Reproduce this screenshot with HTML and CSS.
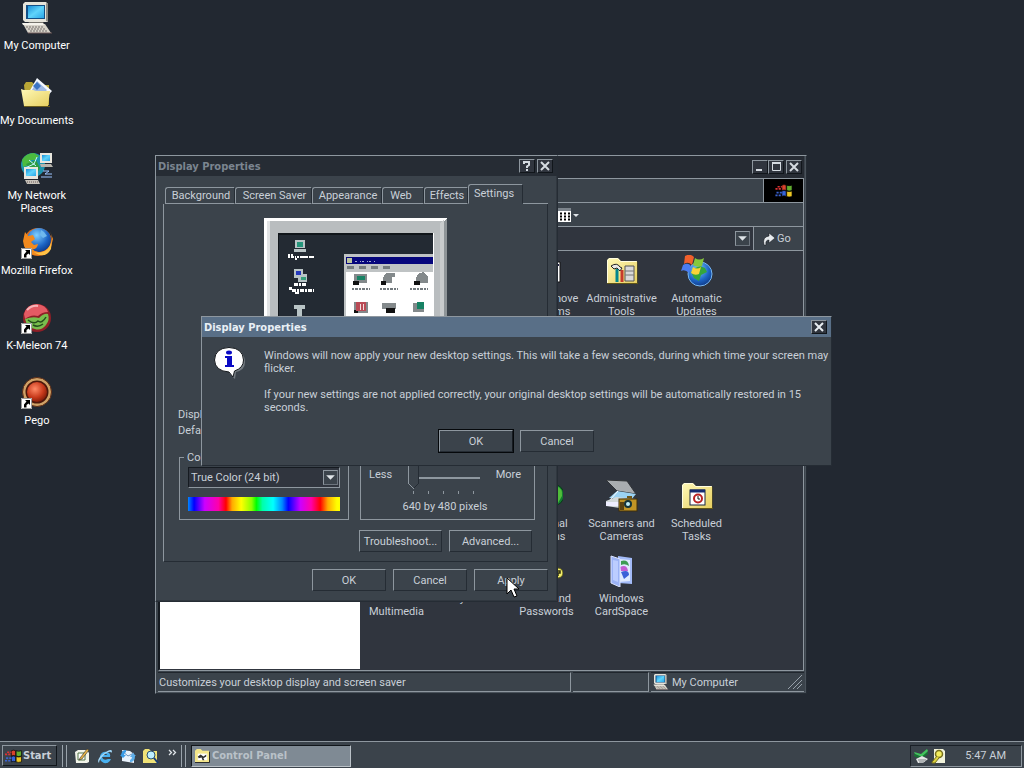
FILE: index.html
```html
<!DOCTYPE html>
<html lang="en">
<head>
<meta charset="utf-8">
<title>Desktop</title>
<link rel="stylesheet" href="styles.css">
</head>
<body>
<svg class="defs" width="0" height="0" aria-hidden="true">
  <defs>
    <linearGradient id="scr" x1="0" y1="0" x2="1" y2="1"><stop offset="0" stop-color="#1a8fd8"/><stop offset=".5" stop-color="#5fd4fb"/><stop offset="1" stop-color="#2aa5e6"/></linearGradient>
    <linearGradient id="fold" x1="0" y1="0" x2="1" y2="1"><stop offset="0" stop-color="#fff9b8"/><stop offset="1" stop-color="#e6cf60"/></linearGradient>
    <radialGradient id="globe" cx=".4" cy=".3" r=".8"><stop offset="0" stop-color="#7fd0ff"/><stop offset=".6" stop-color="#1c63c4"/><stop offset="1" stop-color="#0b2e78"/></radialGradient>
    <radialGradient id="red" cx=".4" cy=".35" r=".7"><stop offset="0" stop-color="#ff8a66"/><stop offset=".6" stop-color="#c83a1c"/><stop offset="1" stop-color="#7a1a08"/></radialGradient>
    <symbol id="pc" viewBox="0 0 32 32">
      <path d="M2 2 4 0h21l2 2v18H4l-2-2z" fill="#e6e4da"/><path d="M25 1l2 1v18l-2-1z" fill="#8d8b84"/>
      <rect x="5" y="3" width="19" height="14" fill="#124f86"/><rect x="7" y="4" width="16" height="12" fill="url(#scr)"/>
      <path d="M8 20h14l2 3H6z" fill="#77756e"/><path d="M2 22h22l6 9H7z" fill="#d6d2c8"/><path d="M1 21h21l1 2H2z" fill="#f5f3ec"/>
      <path d="M5 25h18M7 27h18M9 29h18" stroke="#77706e" stroke-dasharray="2 1"/><path d="M7 31h24" stroke="#6c5757"/>
    </symbol>
    <symbol id="shortcut" viewBox="0 0 11 11">
      <rect width="11" height="11" fill="#fff"/><path d="M.5.5h10v10H.5z" fill="none" stroke="#9b9b9b"/>
      <path d="M4 2h5v5L7.500 5.500 5.500 7v2.500H3V6.500L5.500 3.500z" fill="#000"/>
    </symbol>
    <symbol id="flag" viewBox="0 0 16 14">
      <path d="M6 2q2-1 4 0v5q-2-1-4 0z" fill="#d8432c" stroke="#000" stroke-width=".6"/><path d="M10.500 2q2 1 5 0v5q-3 1-5 0z" fill="#62ad30" stroke="#000" stroke-width=".6"/>
      <path d="M6 7.500q2-1 4 0v5q-2-1-4 0z" fill="#3563d8" stroke="#000" stroke-width=".6"/><path d="M10.500 7.500q2 1 5 0v5q-3 1-5 0z" fill="#edc624" stroke="#000" stroke-width=".6"/>
      <path d="M2 3.500h4M0 5.500h5" stroke="#d33" stroke-width="1.500" stroke-dasharray="2 1"/><path d="M1 9h5M0 11.500h5" stroke="#3a62d0" stroke-width="1.500" stroke-dasharray="2 1"/>
    </symbol>
    <symbol id="folder" viewBox="0 0 32 32">
      <path d="M1 5 3 3h9l3 3h16v22H1z" fill="url(#fold)"/><path d="M1 28.500h31V7" fill="none" stroke="#5f5417"/><path d="M1.500 28V5.500l2-2h8l3 3h16" fill="none" stroke="#fffde0"/>
    </symbol>
  </defs>
</svg>

<main class="desktop">
  <nav class="shortcuts" aria-label="Desktop icons">
    <a class="item" href="#"><svg class="ico"><use href="#pc"/></svg><span>My Computer</span></a>
    <a class="item" href="#"><svg class="ico" viewBox="0 0 32 32">
      <path d="M3 8l2-3h6l3 3h14v20H5z" fill="#b8a636"/><path d="M16 1 31 14 24 22 8 15z" fill="#f4f8ff"/><path d="M16 4l10 9-5 5-10-5z" fill="#9fb9e4"/><path d="M16 5l4 4-4 4-4-4z" fill="#3c74c4"/>
      <path d="M0 12l3 1h9l3 1h14l-2 15H3z" fill="url(#fold)"/><path d="M3 29.500h26" stroke="#6b5c1b"/></svg><span>My Documents</span></a>
    <a class="item" href="#"><svg class="ico" viewBox="0 0 32 32">
      <circle cx="12" cy="13" r="12" fill="#1d94ae"/><path d="M1 8Q5 1 13 1l5 3-4 4-4 0-2 5-6 2z" fill="#4cbb3f"/><path d="M5 12l10-4 4 8-5 9-4-6z" fill="#2e9b40"/><path d="M4 16l9-4 3-7M8 8l7 6" stroke="#c5f5ff" fill="none"/>
      <rect x="19" y="1" width="12" height="10" fill="#e9e7df"/><rect x="21" y="3" width="8" height="6" fill="url(#scr)"/><path d="M19 12h11l2 3H20z" fill="#b7b4ac"/>
      <rect x="3" y="15" width="14" height="12" fill="#e9e7df"/><rect x="5" y="17" width="10" height="7" fill="url(#scr)"/><path d="M4 28h13l2 4H6z" fill="#c8c3ba"/><path d="M6 30h12" stroke="#6d5a5a" stroke-dasharray="1 1"/>
      <path d="M22 19h6l-4 3h7M20 25h11" stroke="#9cc4ff" fill="none"/></svg><span>My Network<br>Places</span></a>
    <a class="item" href="#"><svg class="ico" viewBox="0 0 32 32">
      <circle cx="17" cy="15" r="14" fill="#e26a14"/><circle cx="18" cy="13" r="12" fill="url(#globe)"/>
      <path d="M29 4q4 9 0 17-6 9-16 7Q3 25 2 14L4 5l3 4 5-1 2 4-4 3 3 3 4-1q-1 6-6 5 5 5 12 2 8-4 9-12z" fill="#f28a1e"/><path d="M31 11q-1 9-7 13-6 3-11 1 11 8 17-3z" fill="#ffc145"/><path d="M20 3l3 2 3 4-4 2-3-3z" fill="#6fb8ee"/>
      <use href="#shortcut" x="0" y="21" width="11" height="11"/></svg><span>Mozilla Firefox</span></a>
    <a class="item" href="#"><svg class="ico" viewBox="0 0 32 32">
      <circle cx="16" cy="16" r="14" fill="#8e1f27"/><path d="M3 12Q6 2 16 2q9 1 11 8-6 0-10 4-7-2-13 3z" fill="#e45b64"/><path d="M6 8q5-5 11-4" stroke="#f7b3b6" stroke-width="2" fill="none"/>
      <path d="M4 17q8-3 14-1 5-5 9-4 2 6-2 11-5 6-11 4Q6 26 4 17z" fill="#79bd4d"/><path d="M7 18q6 5 10 1 4 3 8-4M12 23q5 3 10-1" fill="none" stroke="#264d1c" stroke-width="1.500"/>
      <use href="#shortcut" x="0" y="21" width="11" height="11"/></svg><span>K-Meleon 74</span></a>
    <a class="item" href="#"><svg class="ico" viewBox="0 0 32 32">
      <circle cx="16" cy="15" r="13" fill="#4d180b" stroke="#cfa267" stroke-width="3"/><circle cx="16" cy="15" r="14.500" fill="none" stroke="#5c2c16"/><circle cx="16" cy="15" r="10" fill="url(#red)"/>
      <use href="#shortcut" x="0" y="21" width="11" height="11"/></svg><span>Pego</span></a>
  </nav>

  <section class="win explorer" aria-label="Control Panel">
    <header class="titlebar">
      <div class="pair"><button class="cap" aria-label="Minimize"><svg viewBox="0 0 14 12"><path d="M3 9h6" stroke="#d5dbe1" stroke-width="2"/></svg></button><button class="cap" aria-label="Maximize"><svg viewBox="0 0 14 12"><path d="M3.500 2v7.500h8V2M3 2h9" stroke="#d5dbe1" fill="none"/><path d="M3 2h9" stroke="#d5dbe1" stroke-width="2"/></svg></button></div>
      <button class="cap" aria-label="Close"><svg viewBox="0 0 14 12"><path d="M3 2l8 8M11 2l-8 8" stroke="#d5dbe1" stroke-width="2"/></svg></button>
    </header>
    <div class="bar menubar"><div class="brand"><svg width="18" height="15"><use href="#flag"/></svg></div></div>
    <div class="bar toolbar">
      <button class="views" aria-label="Views"><svg width="24" height="16" viewBox="0 0 24 16"><rect x="0" y="1" width="16" height="14" fill="#fff"/><path d="M0 1h16v3H0z" fill="#7c848c"/><path d="M1 6.500h14M1 9.500h14M1 12.500h14" stroke="#000" stroke-width="2" stroke-dasharray="2 2"/><path d="M18 7h6l-3 3z" fill="#dfe4e8"/></svg></button>
    </div>
    <div class="bar address">
      <input type="text" aria-label="Address">
      <button class="drop" aria-label="Show addresses"><svg viewBox="0 0 12 12"><path d="M2 4h8L6 8z" fill="#dfe4e8"/></svg></button>
      <button class="go"><svg width="14" height="14" viewBox="0 0 14 14"><path d="M2 13Q0 5 7 4V1l6 5-6 5V8Q3 8 4 13z" fill="#e8ecef" stroke="#101419" stroke-width=".5"/></svg>Go</button>
    </div>
    <div class="content">
      <aside class="pane"></aside>
      <div class="files">
        <a class="item r1 c3" href="#"><svg class="ico" viewBox="0 0 32 32"><path d="M9 7h20v20H9z" fill="#fff" stroke="#111"/><path d="M10 10h19" stroke="#224" stroke-dasharray="2 2" stroke-width="2"/><path d="M14 14h13v3H14z" fill="#2a3a5c"/><path d="M14 19h13v5H14z" fill="#f0912e"/></svg><span>Add/Remove Programs</span></a>
        <a class="item r1 c4" href="#"><svg class="ico" viewBox="0 0 32 32"><use href="#folder"/><path d="M5 11q6-4 9 1l2 1-2 3-3-3-3 1z" fill="#e8e8e8" stroke="#222"/><path d="M11 14v13" stroke="#00868e" stroke-width="3"/><path d="M16 15v12" stroke="#c63a2c" stroke-width="3"/><path d="M19 11h9v15h-9z" fill="#d9d9d9" stroke="#555"/><path d="M19 16h9M19 20h9" stroke="#777"/></svg><span>Administrative Tools</span></a>
        <a class="item r1 c5" href="#"><svg class="ico" viewBox="0 0 32 32"><circle cx="19" cy="19" r="12" fill="url(#globe)" stroke="#7ab8f0"/><path d="M14 13l5-2 5 2 2 4-6 3-2 6-5-3-3-6z" fill="#35a63c"/><path d="M4 1q5-3 9 1l-2 8q-4-4-8-1z" fill="#f0602c"/><path d="M14 3q4 3 9 0l-2 8q-5 2-9-1z" fill="#86c83c"/><path d="M2 10q5-3 8 1l-2 7q-4-4-8-2z" fill="#4a7cf0"/><path d="M12 12q4 3 8 0l-2 7q-4 2-8-1z" fill="#fbd238"/></svg><span>Automatic Updates</span></a>
        <a class="item r4 c3" href="#"><svg class="ico" viewBox="0 0 32 32"><circle cx="22" cy="15" r="11" fill="#147c30" stroke="#0b3518"/><path d="M25 6q7 2 6 10l-4 7z" fill="#50bd3a"/></svg><span>Regional Options</span></a>
        <a class="item r4 c4" href="#"><svg class="ico" viewBox="0 0 32 32"><path d="M0 0l21 1 9 13-19-3z" fill="#a9adb0" stroke="#303336"/><path d="M11 11l19 3-5 6-22-2z" fill="#9bd2f2"/><path d="M12 11l-8 9" stroke="#fff"/><path d="M0 21l10-4 20 2v5l-16 4-14-2z" fill="#d3dadb"/><path d="M0 22h13v4H0z" fill="#eef"/><rect x="13" y="19" width="18" height="12" fill="#c09425" stroke="#3f2f0a"/><path d="M15 18h6v-2h5v3" fill="#6e551a"/><path d="M14 22h4v8h-4z" fill="#5a4312"/><circle cx="22" cy="24" r="4" fill="#14343a"/><circle cx="22" cy="24" r="2" fill="#bfeef5"/></svg><span>Scanners and Cameras</span></a>
        <a class="item r4 c5" href="#"><svg class="ico" viewBox="0 0 32 32"><use href="#folder"/><rect x="9" y="10" width="15" height="15" fill="#fff" stroke="#17243f"/><path d="M9 11h15" stroke="#142b70" stroke-width="3"/><circle cx="17" cy="18.500" r="4" fill="#fff" stroke="#b82222" stroke-width="2"/><path d="M17 16v3h2" stroke="#111" fill="none"/></svg><span>Scheduled Tasks</span></a>
        <a class="item r5 c1" href="#"><i class="ico"></i><span>Sounds and Multimedia</span></a>
        <a class="item r5 c2" href="#"><i class="ico"></i><span>System</span></a>
        <a class="item r5 c3" href="#"><svg class="ico" viewBox="0 0 32 32"><circle cx="27" cy="18" r="5" fill="#f2ed6a" stroke="#5c5a17"/><path d="M25 16h4v2h-2v3" fill="none" stroke="#2e2e12" stroke-width="1.500"/></svg><span>Users and Passwords</span></a>
        <a class="item r5 c4" href="#"><svg class="ico" viewBox="0 0 32 32"><path d="M12 1l14 2v26l-14-1z" fill="#a3bbf8"/><path d="M13 4l11 1v21l-11 1z" fill="#dfeaff"/><path d="M15 6q7-2 8 5-4-3-8-1z" fill="#3d9b53"/><path d="M14 12q7-3 8 4l-7 0z" fill="#c25cd2"/><path d="M15 17q8-3 8 3l-5 4z" fill="#3a60d8"/><path d="M5 1l9 3v28l-9-4z" fill="#9cb3f6" stroke="#dbe4ff"/><path d="M7 5l5 1v21l-5-2z" fill="#bccdff"/></svg><span>Windows CardSpace</span></a>
      </div>
    </div>
    <footer class="status">
      <div class="cell wide">Customizes your desktop display and screen saver</div>
      <div class="cell blank"></div>
      <div class="cell zone"><svg width="16" height="16"><use href="#pc"/></svg>My Computer<svg class="grip" width="14" height="14" viewBox="0 0 14 14"><path d="M0 14L14 0M5 14l9-9M9 14l5-5" stroke="#98a1aa"/></svg></div>
    </footer>
  </section>

  <section class="win props" aria-label="Display Properties">
    <header class="titlebar"><h2>Display Properties</h2>
      <div class="spaced"><button class="cap" aria-label="Help"><svg viewBox="0 0 14 12"><path d="M4 4V2h5v3L7 6.500V8M6 10h2" fill="none" stroke="#d5dbe1" stroke-width="2"/></svg></button><button class="cap" aria-label="Close"><svg viewBox="0 0 14 12"><path d="M3 2l8 8M11 2l-8 8" stroke="#d5dbe1" stroke-width="2"/></svg></button></div>
    </header>
    <div class="tabs" role="tablist">
      <button role="tab" class="tab t1">Background</button><button role="tab" class="tab t2">Screen Saver</button><button role="tab" class="tab t3">Appearance</button><button role="tab" class="tab t4">Web</button><button role="tab" class="tab t5">Effects</button><button role="tab" class="tab on" aria-selected="true">Settings</button><i class="rest"></i>
    </div>
    <div class="panel">
      <svg class="monitor" width="183" height="170" viewBox="0 0 183 170" shape-rendering="crispEdges">
        <path d="M0 0h183v170H0z" fill="#b9bdbf"/><path d="M0 0h183l-3 3H3v167H0z" fill="#fff"/><path d="M3 3h3v167H3z" fill="#e1e3e4"/><path d="M176 5l4-4v169h-4z" fill="#c9cccd"/><path d="M180 3l3-3v170h-3z" fill="#8f9598"/>
        <path d="M14 15h155v140H14z" fill="#11161b"/><path d="M15 17h154v138H15z" fill="#232a33"/><path d="M169 15h1v140h-1z" fill="#fff"/>
        <g fill="#b9c4c6"><path d="M31 22h10v8H31zM30 31h12v3H30z"/><path d="M30 51h9v9h-9zM34 56h9v8h-9z"/><path d="M30 87h11v4h-3v9h-5v-9h-3z"/></g>
        <path d="M33 24h6v5h-6z" fill="#24957b"/><path d="M32 53h5v4h-5z" fill="#2438bc"/><path d="M37 59h5v3h-5z" fill="#36a07c"/>
        <g stroke="#fff" fill="none"><path d="M24 37h5M24 39h26M31 41h3M36 39h14" stroke-width="2" stroke-dasharray="2 1 3 1 1 1"/><path d="M30 66h12M25 70h3M28 72h22" stroke-width="3" stroke-dasharray="4 1 2 1"/><path d="M31 75h4" stroke-width="2"/></g>
        <path d="M80 36h89v119H80z" fill="#bfc3c4"/><path d="M82 39h87v7H82z" fill="#06067c"/><path d="M83 40h5v5h-5z" fill="#bcc59d"/><path d="M91 43h20" stroke="#a4acd2" stroke-dasharray="2 3 1 1"/>
        <path d="M83 49h48" stroke="#747b7f" stroke-width="3" stroke-dasharray="7 5"/><path d="M82 54h87v101H82z" fill="#fff"/>
        <g fill="#83898b"><path d="M90 56h13v9H90zM122 55h9v4h-3v6h-9v-5zM154 56l5-2 5 4v7h-12v-5zM90 84h14v11H90zM118 85h14v6h-14zM149 85h11v9h-11z"/></g>
        <g fill="#111"><path d="M89 63h6v4h-6zM117 63h5v4h-5zM150 63h6v4h-6zM90 92h4v3h-4zM122 90h9v5h-9z"/></g><path d="M93 58h8v4h-8zM153 84h7v7h-7z" fill="#178264"/><path d="M92 84h10v9H92z" fill="#b94b56"/><path d="M96 86v6M99 86v6" stroke="#f4dede"/>
        <path d="M88 71h18M116 71h18M146 71h18" stroke="#737a7e" stroke-width="2" stroke-dasharray="2 1 3 1"/>
      </svg>
      <p class="info">Display:</p>
      <p class="info">Default Monitor</p>
      <div class="groups">
        <fieldset><legend>Colors</legend>
          <div class="combo"><select aria-label="Colors"><option>True Color (24 bit)</option></select><i class="drop"><svg viewBox="0 0 12 12"><path d="M2 4h8L6 8z" fill="#dfe4e8"/></svg></i></div>
          <div class="spectrum"></div>
        </fieldset>
        <fieldset class="area"><legend>Screen area</legend>
          <div class="range"><span>Less</span><input type="range" min="0" max="4" value="0" aria-label="Screen area"><span>More</span></div>
          <div class="ticks"><i></i><i></i><i></i><i></i><i></i></div>
          <p class="size">640 by 480 pixels</p>
        </fieldset>
      </div>
      <div class="row inner"><button class="btn mid">Troubleshoot...</button><button class="btn mid">Advanced...</button></div>
    </div>
    <div class="row outer"><button class="btn">OK</button><button class="btn">Cancel</button><button class="btn">Apply</button></div>
  </section>

  <section class="win msg" role="dialog" aria-label="Display Properties">
    <header class="titlebar"><h2>Display Properties</h2><button class="cap" aria-label="Close"><svg viewBox="0 0 14 12"><path d="M3 2l8 8M11 2l-8 8" stroke="#e8edf1" stroke-width="2"/></svg></button></header>
    <div class="body">
      <svg class="bubble" viewBox="0 0 32 32"><path d="M18 3q13 1 13 12 0 8-9 10l-1 7-6-6z" fill="#747b81"/><path d="M15 .500Q29 1 29.500 13q0 8-9 11l-1.500 6-4-5Q1 24 .500 13 1 1 15 .500z" fill="#fff" stroke="#14181c"/><path d="M11 9h7v9h2v2h-9v-2h2v-7h-2z" fill="#0a0ac4"/><ellipse cx="15" cy="5.500" rx="3" ry="2" fill="#0a0ac4"/></svg>
      <div class="text"><p>Windows will now apply your new desktop settings. This will take a few seconds, during which time your screen may<br>flicker.</p><p>If your new settings are not applied correctly, your original desktop settings will be automatically restored in 15<br>seconds.</p></div>
    </div>
    <div class="row"><button class="btn default">OK</button><button class="btn">Cancel</button></div>
  </section>

  <svg class="cursor" width="14" height="22" viewBox="0 0 14 22"><path d="M1 1v16l4-4 3 7 3-1-3-7h5z" fill="#fff" stroke="#000"/></svg>
</main>

<footer class="taskbar">
  <button class="start"><svg width="17" height="16"><use href="#flag"/></svg>Start</button>
  <i class="sep"></i>
  <div class="quick">
    <button aria-label="Show Desktop"><svg viewBox="0 0 16 16"><path d="M1 4l3-2h9l2 3v9l-2 1H2z" fill="#f2f4ea"/><path d="M4 5h7v7H4z" fill="#fff" stroke="#527447"/><path d="M6 10l7-9 2 1-7 9-3 1z" fill="#e4b246" stroke="#333" stroke-width=".6"/></svg></button>
    <button aria-label="Internet Explorer"><svg viewBox="0 0 16 16"><path d="M13 9H5q1 4 6 2h3q-2 5-7 4-5-2-4-7 2-5 7-4 4 1 3 5zM5.500 7h5Q8 4 5.500 7" fill="#48b0ef"/><path d="M2 15q-3-3 4-9 8-6 9-3 0 1-1 2 0-3-6 1-6 5-6 9z" fill="#a3d9fa"/></svg></button>
    <button aria-label="Outlook Express"><svg viewBox="0 0 16 16"><path d="M2 2l8 1 4 3v9l-12-2z" fill="#e9f2fc"/><path d="M2 3l6 5 6-3" fill="none" stroke="#6b91b9"/><path d="M1 7q1-5 5-5v2Q4 5 4 7h2l-3 3-3-3z" fill="#399be6"/><path d="M15 8q0 6-5 6v-2q2-1 2-3h-2l3-4 3 3z" fill="#5daee9"/></svg></button>
    <button aria-label="Search"><svg viewBox="0 0 16 16"><path d="M0 3l2-2h4l2 2h6v12H0z" fill="#f0e276"/><circle cx="8" cy="7" r="4" fill="#bdefff" stroke="#2a506e"/><path d="M11 10l4 5" stroke="#183d76" stroke-width="2"/></svg></button>
    <button class="more" aria-label="More"><svg width="9" height="7" viewBox="0 0 9 7"><path d="M1 1l2.500 2.500L1 6M5 1l2.500 2.500L5 6" fill="none" stroke="#dfe4e8" stroke-width="1.300"/></svg></button>
  </div>
  <i class="sep"></i>
  <button class="task"><svg viewBox="0 0 16 16"><path d="M0 3l2-2h4l2 2h7v12H0z" fill="#f5e78a"/><rect x="3" y="6" width="10" height="7" fill="#fff"/><path d="M3 9l3-2 3 2 3-2v2l-3 2 1 2H8l-1-3-3 1z" fill="#333"/><path d="M0 15.500h15.500V4" stroke="#222" fill="none"/></svg>Control Panel</button>
  <div class="tray">
    <svg viewBox="0 0 16 16"><path d="M1 4l7 2 6-5 1 2-6 6-7-3z" fill="#41c45c"/><path d="M1 6l7 3 7-5v2L8 11 1 8z" fill="#147830"/><path d="M3 11l6-3 6 3-5 4H5z" fill="#e4e6e6"/><path d="M5 12h8M6 14h5" stroke="#7a8083"/></svg>
    <svg viewBox="0 0 16 16"><path d="M3 1h9l2 2v12H3z" fill="#f2f4dc"/><circle cx="8" cy="6" r="3.500" fill="#f4ee5d" stroke="#77701c" stroke-width="1.500"/><path d="M6 8l-5 6v1h3l4-5" fill="#dcd23e" stroke="#77701c"/></svg>
    <time>5:47 AM</time>
  </div>
</footer>
</body>
</html>
```
FILE: styles.css
```css
* { box-sizing: border-box; }
body {
  --line: #8e979f; --edge: #252c34; --face: #3b434b; --dark: #30353e; --ink: #c9d0d8;
  margin: 0; height: 100vh; display: flex; flex-direction: column; overflow: hidden;
  background: #222831; color: var(--ink);
  font: 11px/13px Roboto, "DejaVu Sans Condensed", sans-serif;
}
button, input, select { font: inherit; color: inherit; }
button { padding: 0; border: 0; background: none; }
h2, p { margin: 0; font-size: 11px; line-height: 13px; }
h2, .start, .task { font-family: "DejaVu Sans Condensed", sans-serif; font-weight: bold; }
svg { display: block; }
.defs { position: absolute; }
.desktop { position: relative; flex: 1; min-height: 0; }

.shortcuts { display: grid; grid-auto-rows: 75px; width: 73px; color: #fff; white-space: nowrap; }
.item { display: flex; flex-direction: column; align-items: center; gap: 5px; padding-top: 2px; color: inherit; text-align: center; text-decoration: none; }
.ico { width: 32px; height: 32px; flex: none; }

.win { position: absolute; background: var(--face); border: 1px solid var(--edge); border-top-color: var(--line); border-left-color: var(--line); }
.titlebar { display: flex; align-items: center; justify-content: space-between; gap: 2px; height: 20px; padding: 0 3px 0 2px; }
.titlebar h2 { color: #7b8590; }
.pair, .spaced { display: flex; }
.spaced { gap: 2px; }
.cap { width: 16px; height: 14px; background: var(--dark); border: 1px solid #11161b; border-top-color: var(--line); border-left-color: var(--line); }
.cap svg { width: 14px; height: 12px; }
.drop { width: 15px; height: 15px; flex: none; border: 1px solid #6d757e; border-top-color: var(--line); border-left-color: var(--line); background: var(--face); }
.drop svg { width: 13px; height: 13px; }

.explorer { left: 155px; top: 155px; width: 652px; padding: 0 2px 1px; box-shadow: inset -1px -1px #4a525b; }
.explorer .titlebar { height: 22px; padding: 0 2px; justify-content: flex-end; background: #262b33; }
.bar { display: flex; align-items: center; height: 24px; border-top: 1px solid var(--line); border-right: 1px solid var(--line); }
.menubar { justify-content: flex-end; }
.brand { display: flex; align-items: center; justify-content: center; width: 40px; height: 23px; background: #000; border-left: 1px solid var(--line); }
.views { margin-left: 397px; }
.address input { flex: 1; min-width: 0; height: 21px; border: 0; background: var(--dark); }
.address { background: var(--dark); }
.address .drop { margin-right: 3px; }
.go { display: flex; align-items: center; gap: 1px; width: 50px; height: 23px; padding-left: 8px; background: var(--face); border-left: 1px solid var(--line); }
.content { display: flex; height: 421px; background: var(--dark); border: 1px solid var(--line); border-left-color: #161b21; }
.pane { width: 201px; height: 418px; background: #fff; border-left: 1px solid #161b21; }
.files { display: grid; grid-template-columns: repeat(5, 75px); grid-template-rows: repeat(5, 75px); margin-left: -1px; padding-top: 2px; }
.files .item span { max-width: 74px; }
.r1 { grid-row: 1; } .r4 { grid-row: 4; } .r5 { grid-row: 5; }
.c1 { grid-column: 1; } .c2 { grid-column: 2; } .c3 { grid-column: 3; } .c4 { grid-column: 4; } .c5 { grid-column: 5; }
.status { display: flex; gap: 2px; padding-top: 1px; }
.cell { display: flex; align-items: center; gap: 3px; height: 20px; padding: 0 2px 0 1px; border-right: 1px solid var(--line); border-bottom: 1px solid var(--line); border-top: 1px solid #20262d; }
.wide { flex: 1; }
.blank { width: 76px; }
.zone { width: 153px; padding-left: 2px; border-right: 0; }
.grip { margin-left: auto; }

.props { left: 155px; top: 155px; width: 403px; padding-bottom: 10px; box-shadow: inset -1px -1px #30373f; }
.props .titlebar { padding-right: 4px; background: #262c34; }
.tabs { display: flex; align-items: flex-end; margin: 8px 9px 0 7px; }
.tab { height: 17px; padding-left: 2px; border: 1px solid var(--line); border-right-color: var(--edge); border-top-left-radius: 3px; border-bottom-color: var(--line); text-align: center; }
.tab:first-child { margin-left: 2px; }
.t1 { width: 70px; } .t2 { width: 77px; } .t3 { width: 70px; } .t4 { width: 42px; padding-right: 6px; } .t5 { width: 44px; }
.on { width: 55px; height: 20px; padding: 0 3px 2px 0; border-bottom-color: transparent; }
.rest { flex: 1; border-bottom: 1px solid var(--line); }
.panel { margin: 0 9px 0 7px; padding: 14px 15px 9px; border: 1px solid var(--edge); border-left-color: var(--line); border-top: 0; }
.monitor { margin: 0 auto 20px; }
.info { margin: 0 -1px 3px; }
.groups { display: flex; gap: 11px; margin: 14px -3px 0 0; }
fieldset { flex: 1; min-width: 0; margin: 0; padding: 0 8px; height: 69px; border: 1px solid var(--line); }
legend { padding: 0 3px; margin-left: -4px; }
.combo { display: flex; align-items: center; height: 21px; margin-top: 3px; padding-right: 1px; background: var(--dark); border: 1px solid var(--line); border-top-color: #161b21; border-left-color: #161b21; }
.combo select { flex: 1; min-width: 0; appearance: none; border: 0; padding: 0 2px; background: none; }
.spectrum { height: 14px; margin-top: 9px; background: linear-gradient(90deg, #08f, #00f 4%, #c0f 11%, #f0a 20%, #f00 25%, #fa0 29%, #ff0 35%, #8f0 42%, #0f0 45%, #0fa 49%, #0ff 56%, #08f 62%, #00f 66%, #c0f 74%, #f0a 81%, #f00 87%, #fa0 92%, #ff0 98%); }
.area { padding-right: 13px; padding-left: 8px; }
.range { display: flex; align-items: flex-start; justify-content: space-between; height: 24px; margin-top: 1px; }
.range span { padding-top: 3px; }
.range input { width: 72px; height: 24px; margin: 0; appearance: none; background: linear-gradient(var(--line), var(--line)) 0 12px / 100% 2px no-repeat; }
.range input::-webkit-slider-thumb {
  appearance: none; width: 11px; height: 24px;
  background:
    linear-gradient(var(--line), var(--line)) 0 0 / 1px 18px no-repeat,
    linear-gradient(to top right, transparent 42%, var(--line) 43% 57%, transparent 58%) 0 18px / 6px 6px no-repeat,
    linear-gradient(to top left, transparent 42%, var(--edge) 43% 57%, transparent 58%) 5px 18px / 6px 6px no-repeat,
    linear-gradient(var(--edge), var(--edge)) 10px 0 / 1px 18px no-repeat,
    linear-gradient(var(--face), var(--face)) 0 0 / 11px 18px no-repeat;
}
.ticks { display: flex; justify-content: space-between; width: 61px; height: 3px; margin: 2px 0 0 44px; }
.ticks i { width: 1px; background: var(--line); }
.size { margin-top: 6px; text-align: center; }
.row { display: flex; gap: 7px; }
.inner { justify-content: flex-end; margin-top: 10px; }
.outer { justify-content: flex-end; padding: 7px 9px 0; }
.btn { width: 74px; height: 22px; border: 1px solid var(--edge); border-top-color: var(--line); border-left-color: var(--line); background: var(--face); }
.mid { width: 83px; }

.msg { left: 201px; top: 316px; width: 631px; padding-bottom: 13px; }
.msg .titlebar { padding-right: 4px; background: #596f87; }
.msg h2 { color: #e9f0f6; }
.body { display: flex; gap: 18px; padding: 12px 0 0 12px; }
.bubble { width: 32px; height: 32px; flex: none; margin-top: -2px; }
.text { display: grid; gap: 13px; white-space: nowrap; }
.msg .row { justify-content: center; padding: 16px 0 0; }
.default { outline: 1px solid #05080b; border-right-color: #161b21; }
.cursor { position: absolute; left: 506px; top: 577px; }

.taskbar { display: flex; align-items: center; height: 27px; padding: 1px 2px 0; background: var(--face); border-top: 1px solid var(--line); }
.start { display: flex; align-items: center; gap: 1px; width: 55px; height: 21px; padding-left: 2px; border: 1px solid #11161b; border-top-color: var(--line); border-left-color: var(--line); }
.sep { width: 5px; height: 22px; margin-left: 5px; border-left: 1px solid #9aa3ab; border-right: 1px solid #9aa3ab; }
.quick { display: flex; align-items: center; gap: 7px; width: 109px; padding-left: 7px; }
.quick svg { width: 16px; height: 16px; }
.quick .more { align-self: flex-start; }
.quick .more svg { width: 9px; height: 7px; margin: 1px 0 0 2px; }
.task { display: flex; align-items: center; gap: 2px; width: 160px; height: 22px; margin-left: 5px; padding-left: 3px; color: #b9c1c8; background: #7f8a94; border: 1px solid #bac1c7; border-top-color: #11161b; border-left-color: #11161b; }
.task svg { width: 15px; height: 15px; }
.tray { display: flex; align-items: center; gap: 2px; width: 112px; height: 22px; margin-left: auto; padding: 0 15px 0 2px; border: 1px solid var(--line); border-top-color: #1a2027; border-left-color: #1a2027; }
.tray svg { width: 16px; height: 16px; }
.tray time { margin-left: auto; }
```
